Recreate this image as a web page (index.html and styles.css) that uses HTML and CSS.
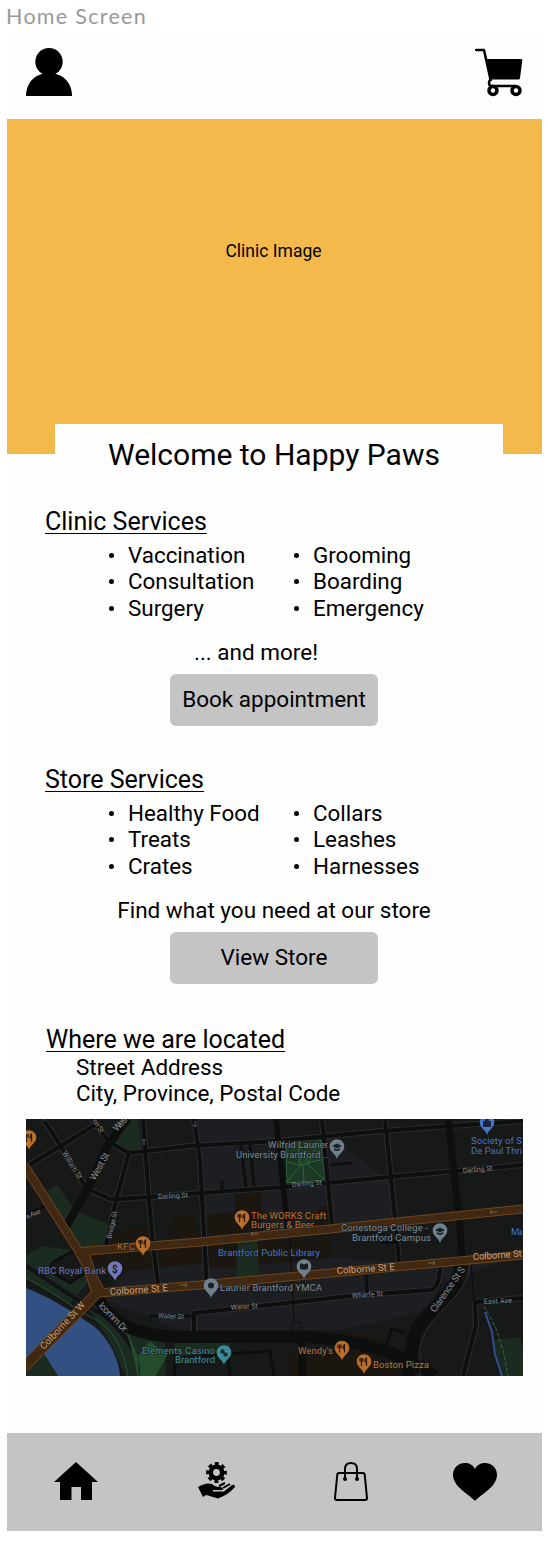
FILE: index.html
```html
<!DOCTYPE html>
<html lang="en">
<head>
<meta charset="utf-8">
<title>Happy Paws</title>
<link rel="stylesheet" href="styles.css">
</head>
<body>
<div class="frame-label">Home Screen</div>
<main class="screen">
  <header class="topbar">
    <svg class="user-icon" viewBox="0 0 46 48"><circle cx="23" cy="13.700" r="13.700"/><path d="M0 48C0 34 10 25 23 25S46 34 46 48Z"/></svg>
    <svg class="cart-icon" viewBox="0 0 48 49"><path d="M1 2H9L15.500 31.500" fill="none" stroke="#000" stroke-width="2.500" stroke-linecap="round" stroke-linejoin="round"/><path d="M11 11H46Q47.500 11 47.300 12.500L45 30Q44.800 31.500 43.500 31.500H15Z"/><path d="M17 31.500Q14 31.500 14 35Q14 38 17 38H41" fill="none" stroke="#000" stroke-width="2.500"/><circle cx="18" cy="42.500" r="4" fill="none" stroke="#000" stroke-width="3.500"/><circle cx="41" cy="42.500" r="4" fill="none" stroke="#000" stroke-width="3.500"/></svg>
  </header>
  <section class="hero">
    <p class="hero-text">Clinic Image</p>
    <h1 class="welcome">Welcome to Happy Paws</h1>
  </section>
  <section class="services">
    <h2 class="heading">Clinic Services</h2>
    <div class="lists">
      <ul class="list"><li>Vaccination</li><li>Consultation</li><li>Surgery</li></ul>
      <ul class="list"><li>Grooming</li><li>Boarding</li><li>Emergency</li></ul>
    </div>
    <p class="note note-more">... and more!</p>
    <button class="button">Book appointment</button>
  </section>
  <section class="services">
    <h2 class="heading">Store Services</h2>
    <div class="lists">
      <ul class="list"><li>Healthy Food</li><li>Treats</li><li>Crates</li></ul>
      <ul class="list"><li>Collars</li><li>Leashes</li><li>Harnesses</li></ul>
    </div>
    <p class="note">Find what you need at our store</p>
    <button class="button button-store">View Store</button>
  </section>
  <section class="location">
    <h2 class="heading">Where we are located</h2>
    <address class="address">Street Address<br>City, Province, Postal Code</address>
    <svg class="map" viewBox="26 1119 497 257">
      <defs>
        <path id="pin" d="M0 12C-1 7-7.300 5-7.300-.5A7.300 7.300 0 0 1 7.300-.5C7.300 5 1 7 0 12Z"/>
        <path id="fork" d="M-2.500-4V4M-4-4V-1H-1V-4M2.500 4V-4Q1-3 1 0H2.500" fill="none" stroke="#2a1c10" stroke-width="1.200"/>
        <path id="cap" d="M-5-1L0-3.500L5-1L0 1.500ZM-3 1V3Q0 5 3 3V1L0 2.500Z" fill="#1b2024"/>
      </defs>
      <rect x="26" y="1119" width="497" height="257" fill="#171918"/>
      <g fill="#1d1e21">
        <path d="M197 1119H278L290 1230L205 1238ZM286 1185L330 1181L390 1178L396 1218L290 1228ZM328 1136L386 1178H331Z"/>
        <path d="M155 1245L400 1262L523 1254L440 1284L430 1310L340 1330H180L100 1298Z"/>
      </g>
      <g fill="#1b1610">
        <path d="M110 1233L140 1225L152 1224L155 1243L108 1248ZM175 1215H195L197 1238H170ZM235 1192L262 1189V1231L207 1236V1215L235 1212ZM318 1208L328 1204L331 1225H315ZM85 1252L205 1245V1263L110 1272ZM208 1246L330 1238V1258L210 1269ZM290 1350L400 1352V1376H286ZM340 1331L394 1342V1350L340 1340Z"/>
      </g>
      <g fill="#1c2b20">
        <path d="M115 1145L128 1119H138L142 1150L129 1153ZM45 1192L57 1185L73 1207L62 1226ZM79 1212L108 1224L105 1246L77 1248L68 1229ZM26 1255L42 1246L70 1250L90 1280L70 1304L26 1278ZM238 1240L257 1238L259 1274L236 1278ZM494 1340L520 1337L523 1350V1376H500Z"/>
        <path d="M80 1300L100 1306L120 1330L138 1338L165 1342L166 1376H125Q105 1325 80 1300ZM26 1366L43 1349L58 1376H26ZM174 1340H230V1353L175 1356Z"/>
      </g>
      <path d="M52 1263L71 1252L88 1258V1271L70 1283L50 1271Z" fill="#171918"/>
      <path d="M26 1288C50 1297 78 1315 95 1327C110 1340 119 1360 120 1376H58L42 1350L26 1366Z" fill="#335083"/>
      <path d="M26 1266C65 1292 87 1306 103 1315C125 1333 138 1355 143 1376" fill="none" stroke="#242828" stroke-width="6"/>
      <path d="M26 1266C65 1292 87 1306 103 1315C125 1333 138 1355 143 1376" fill="none" stroke="#111414" stroke-width="4"/>
      <path d="M26 1278C65 1299 80 1313 95 1319C115 1330 124 1352 128 1376" fill="none" stroke="#285438"/>
      <path d="M285 1139L321 1136L325 1180L287 1183Z" fill="#1d3825"/>
      <path d="M286 1140L320 1137L325 1180L287 1183ZM287 1182L300 1166L298 1139M324 1179L308 1165L320 1137M304 1181L303 1166L287 1162M307 1163L324 1159" fill="none" stroke="#2e6338"/>
      <circle cx="303" cy="1161" r="4" fill="#1f4229" stroke="#2e6338"/>
      <path d="M127 1332L138 1358V1376M139 1355L150 1342L167 1355L155 1376H141Z" fill="#234b2c" stroke="#235233"/>
      <g fill="none" stroke="#2b2d2e" stroke-width="6" stroke-linejoin="round">
        <path d="M43 1119L60 1145L86 1188L110 1199Q113 1200 200 1193L285 1187L400 1176L523 1165M26 1167L95 1125M92 1119L109 1142L129 1153L190 1146L278 1141L370 1132L450 1126L523 1121M129 1153L116 1200L106 1245M143 1119L149 1200L153 1245L158 1284M194 1119L200 1160L207 1290M276 1119L283 1185L288 1230M322 1119L332 1225M385 1119L395 1218L399 1262M448 1119L460 1225L462 1258M475 1302L523 1298M475 1302L476 1325L463 1376M194 1335V1313L260 1306L350 1296L430 1290Q440 1288 440 1265"/>
      </g>
      <g fill="none" stroke="#0d0e0e" stroke-width="4" stroke-linejoin="round">
        <path d="M43 1119L60 1145L86 1188L110 1199Q113 1200 200 1193L285 1187L400 1176L523 1165M26 1167L95 1125M92 1119L109 1142L129 1153L190 1146L278 1141L370 1132L450 1126L523 1121M129 1153L116 1200L106 1245M143 1119L149 1200L153 1245L158 1284M194 1119L200 1160L207 1290M322 1119L332 1225M385 1119L395 1218L399 1262M475 1302L523 1298M475 1302L476 1325L463 1376M194 1335V1313L260 1306L350 1296L430 1290Q440 1288 440 1265"/>
        <path d="M241 1145L246 1187M250 1144L254 1186M222 1181V1190M331 1165L352 1163M52 1263L71 1252L85 1256M52 1263L50 1271L70 1283L88 1271M106 1244L110 1235M366 1272L367 1293M149 1316H193M200 1356L270 1351L274 1376M228 1356L230 1376M176 1352L174 1376M384 1350L392 1329L406 1333M26 1215L45 1206M380 1242H397" stroke-width="3"/>
        <path d="M276 1119L283 1185L288 1230" stroke-width="6"/>
        <path d="M448 1119L460 1225L462 1262" stroke-width="7"/>
        <path d="M128 1119L109 1143L87 1190L63 1232" stroke-width="8"/>
        <path d="M461 1258C464 1296 420 1309 413 1340L408 1376" stroke-width="13"/>
        <path d="M97 1297C112 1325 138 1335 175 1337L310 1337C350 1340 400 1350 435 1376" stroke-width="12"/>
        <path d="M302 1340V1376" stroke-width="7"/>
      </g>
      <path d="M290 1240L294 1320M292 1334V1322H300L303 1336M471 1262L474 1302" fill="none" stroke="#0c0d0d"/>
      <path d="M470 1260C471 1300 426 1310 420 1350V1376" fill="none" stroke="#292d2e"/>
      <g fill="none" stroke="#70451c" stroke-linejoin="round">
        <path d="M24 1165L78 1250L101 1292M76 1252L200 1242L320 1230L523 1209M98 1293L200 1285L320 1274L523 1255" stroke-width="9"/>
        <path d="M24 1367L97 1293L83 1250" stroke-width="11"/>
      </g>
      <g fill="none" stroke="#402813" stroke-linejoin="round">
        <path d="M24 1165L78 1250L101 1292M76 1252L200 1242L320 1230L523 1209M98 1293L200 1285L320 1274L523 1255" stroke-width="7"/>
        <path d="M24 1367L97 1293L83 1250" stroke-width="9"/>
      </g>
      <path d="M485 1312L492 1332L495 1354L502 1376" fill="none" stroke="#304f8b" stroke-width="2"/>
      <path d="M484 1306L495 1326L503 1350L508 1376" fill="none" stroke="#37633e" stroke-dasharray="4 2"/>
      <g fill="none" stroke="#706b43"><path d="M252 1234H258M253 1232L251 1234L253 1236M490 1212H497M492 1210L490 1212L492 1214M180 1285H187M185 1283L187 1285L185 1287M428 1263H435M433 1261L435 1263L433 1265"/></g>
      <g fill="none" stroke="#54536d"><path d="M144 1139V1145M142 1141L144 1139L146 1141M195 1121V1127M193 1125L195 1127L197 1125M43 1119L45 1121"/></g>

      <g fill="#b96e2a"><use href="#pin" x="29" y="1138"/><use href="#pin" x="143" y="1244"/><use href="#pin" x="242" y="1218"/><use href="#pin" x="342" y="1348.500"/><use href="#pin" x="364" y="1362"/></g>
      <use href="#fork" x="29" y="1138"/><use href="#fork" x="143" y="1244"/><use href="#fork" x="242" y="1218"/><use href="#fork" x="342" y="1348.500"/><use href="#fork" x="364" y="1362"/>
      <g fill="#6f808d"><use href="#pin" x="337" y="1147"/><use href="#pin" x="440" y="1231"/><use href="#pin" x="304" y="1267"/><use href="#pin" x="211" y="1286"/></g>
      <use href="#cap" x="337" y="1147"/><use href="#cap" x="440" y="1231"/>
      <circle cx="211" cy="1285.500" r="3" fill="#1b2024"/>
      <path d="M300 1263.500Q302 1263 304 1264.500Q306 1263 308 1263.500V1269.500Q306 1269 304 1270Q302 1269 300 1269.500Z" fill="#1b2024"/>
      <use href="#pin" x="487" y="1123" fill="#4777c8"/><path d="M483 1127V1121H485V1119H489V1121H491V1127Z" fill="#1b2740"/>
      <use href="#pin" x="115" y="1269" fill="#7478b8"/><text class="dollar" x="112" y="1273">$</text>
      <use href="#pin" x="224" y="1353" fill="#3d8b9a"/><path d="M221 1350H224V1353H227V1356H224V1353H221Z" fill="#162d32" stroke="#162d32"/>

      <g class="place" fill="#7c8c96">
        <text x="268" y="1148" textLength="60">Wilfrid Laurier</text><text x="236" y="1158" textLength="92">University Brantford...</text>
        <text x="341" y="1231" textLength="87">Conestoga College -</text><text x="352" y="1241" textLength="79">Brantford Campus</text>
        <text x="220" y="1291" textLength="102">Laurier Brantford YMCA</text>
      </g>
      <g class="place" fill="#4474c4">
        <text x="471" y="1143.500" textLength="51">Society of S</text><text x="471" y="1153.500" textLength="51">De Paul Thri</text>
        <text x="218" y="1256" textLength="102">Brantford Public Library</text><text x="511" y="1235" textLength="11.500">Ma</text>
      </g>
      <g class="place" fill="#bd722e">
        <text x="251" y="1218.500" textLength="75">The WORKS Craft</text><text x="251" y="1228" textLength="63">Burgers &amp; Beer</text>
        <text x="117" y="1250" textLength="18">KFC</text><text x="298" y="1353.500" textLength="35">Wendy's</text><text x="373" y="1367.500" textLength="56">Boston Pizza</text>
      </g>
      <g class="place" fill="#7478b8"><text x="38" y="1274" textLength="68">RBC Royal Bank</text></g>
      <g class="place" fill="#3d929b"><text x="142" y="1353.500" textLength="73">Elements Casino</text><text x="175" y="1363" textLength="40">Brantford</text></g>
      <g class="road-name">
        <text transform="translate(110 1295) rotate(-4)" textLength="58">Colborne St E</text>
        <text transform="translate(337 1274) rotate(-4)" textLength="58">Colborne St E</text>
        <text transform="translate(473 1260) rotate(-4)" textLength="49">Colborne St</text>
        <text transform="translate(44 1350) rotate(-47)" textLength="61">Colborne St W</text>
      </g>
      <g class="street">
        <text transform="translate(95 1181) rotate(-61)" textLength="30">West St</text>
        <text transform="translate(117 1132) rotate(-48)" textLength="16">Wes</text>
        <text transform="translate(98 1306) rotate(46)" textLength="37">Icomm Dr</text>
        <text transform="translate(435 1313) rotate(-55)" textLength="53">Clarence St S</text>
      </g>
      <g class="street-small">
        <text transform="translate(62 1153) rotate(58)" textLength="31">William St</text>
        <text transform="translate(92 1121) rotate(55)" textLength="15">on St</text>
        <text transform="translate(111 1239) rotate(-77)" textLength="28">Bridge St</text>
        <text transform="translate(27 1219) rotate(-23)" textLength="15">s Ave</text>
        <text transform="translate(158 1199) rotate(-3)" textLength="30">Darling St</text>
        <text transform="translate(292 1187) rotate(-4)" textLength="30">Darling St</text>
        <text transform="translate(463 1173) rotate(-5)" textLength="30">Darling St</text>
        <text transform="translate(158 1318) rotate(2)" textLength="26">Water St</text>
        <text transform="translate(231 1310) rotate(-4)" textLength="27">Water St</text>
        <text transform="translate(352 1298) rotate(-4)" textLength="31">Wharfe St</text>
        <text transform="translate(484 1304) rotate(-3)" textLength="28">East Ave</text>
      </g>
    </svg>
  </section>
  <nav class="navbar">
    <svg class="home-icon" viewBox="0 0 44 38"><path d="M22 0L44 20H38V38H27V25H17.500V38H6V20H0Z"/></svg>
    <svg class="care-icon" viewBox="0 0 37 37"><g fill="none" stroke="#000"><circle cx="18.500" cy="10.500" r="5.700" stroke-width="4.600"/><circle cx="18.500" cy="10.500" r="8.700" stroke-width="3.400" stroke-dasharray="3.800 3.033" stroke-dashoffset="1.900"/></g><path d="M0 25Q8 20 14 22C16 24 18 25 22 25Q25 25 25 28H15V29.500H26L34 23Q37 22 37 25Q30 33 20 36.500Q12 34 8 33L5 35Z"/><path d="M21 24L27 21M25 26L32 22" stroke="#000" stroke-width="2"/></svg>
    <svg class="bag-icon" viewBox="0 0 34 39"><path d="M5 11H29Q30.500 11 30.700 12.500L33 36Q33 38 31 38H3Q1 38 1 36L3.300 12.500Q3.500 11 5 11Z" fill="none" stroke="#000" stroke-width="2"/><path d="M11 16V7Q11 1 17 1T23 7V16" fill="none" stroke="#000" stroke-width="2"/><circle cx="11" cy="17" r="2"/><circle cx="23" cy="17" r="2"/></svg>
    <svg class="heart-icon" viewBox="0 0 44 38"><path d="M22 38C17 32 0 24 0 12C0-1 17-4 22 6C27-4 44-1 44 12C44 24 27 32 22 38Z"/></svg>
  </nav>
</main>
</body>
</html>
```
FILE: styles.css
```css
* { box-sizing: border-box; }
body { margin: 0; background: #fff; color: #000; font-family: Roboto, sans-serif; }
h1, h2, p, ul { margin: 0; padding: 0; font-weight: 400; }
svg { display: block; flex: none; }
.frame-label { height: 33px; padding: 4px 0 0 6px; font: 21.500px/25px Lato, sans-serif; letter-spacing: 1.300px; color: #999; }
.screen { width: 535px; margin-left: 7px; background: #fefefe; }
.topbar { height: 86px; padding: 15px 19px 0; display: flex; justify-content: space-between; align-items: flex-start; }
.user-icon { width: 46px; height: 48px; }
.cart-icon { width: 48px; height: 49px; }
.hero { height: 335px; display: flex; flex-direction: column; align-items: center; background: #f3b94b; }
.hero-text { flex: none; padding: 121px 2px 0 0; height: 305px; font-size: 17.500px; line-height: 22px; }
.welcome { width: 448px; height: 60px; flex: none; margin-left: 9px; padding: 11px 0 0 53px; background: #fefefe; font-size: 30px; line-height: 40px; white-space: nowrap; }
.services { height: 258px; padding: 53px 0 0 38px; }
.heading { font-size: 25px; line-height: 30px; text-decoration: underline; text-decoration-thickness: 1.300px; text-underline-offset: 3px; }
.lists { display: grid; grid-template-columns: 185px 185px; padding: 5px 0 0 83px; }
.list { list-style: none; font-size: 22.400px; line-height: 26.300px; }
.list li { display: flex; white-space: nowrap; }
.list li::before { content: ""; width: 5px; height: 5px; margin: 11px 15px 0 -20px; border-radius: 50%; background: #000; transform: translateX(1px); }
.note { margin: 18px 0 8px; padding-right: 39px; font-size: 22.500px; line-height: 27px; text-align: center; white-space: nowrap; }
.note-more { padding-right: 75px; }
.button { display: block; width: 208px; height: 52px; margin-left: 125px; padding: 0; border: 0; border-radius: 6px; background: #c4c4c4; color: #000; font: 22.500px/51px Roboto, sans-serif; }
.button-store { padding-bottom: 1px; }
.location { height: 463px; padding: 55px 0 0 19px; }
.location .heading { padding-left: 20px; }
.address { height: 64px; padding-left: 50px; font-size: 22.450px; line-height: 26.300px; font-style: normal; margin-top: -1px; }
.map { width: 497px; height: 257px; margin-top: 1px; overflow: hidden; }
.place { font: 9.500px Roboto, sans-serif; paint-order: stroke; stroke: #171a1a; stroke-width: 1px; }
.road-name { font: 9.500px Roboto, sans-serif; fill: #c9a47d; }
.street { font: 9.500px Roboto, sans-serif; fill: #8b8e90; }
.street-small { font: 7px Roboto, sans-serif; fill: #858889; }
.dollar { font: bold 10px Roboto, sans-serif; fill: #171a25; }
.navbar { height: 98px; padding: 29px 0 0 47px; display: flex; align-items: flex-start; background: #c4c4c4; }
.home-icon { width: 44px; height: 38px; }
.care-icon { width: 37px; height: 37px; margin-left: 100px; }
.bag-icon { width: 34px; height: 39px; margin-left: 99px; }
.heart-icon { width: 44px; height: 38px; margin: 1px 0 0 85px; }
```
